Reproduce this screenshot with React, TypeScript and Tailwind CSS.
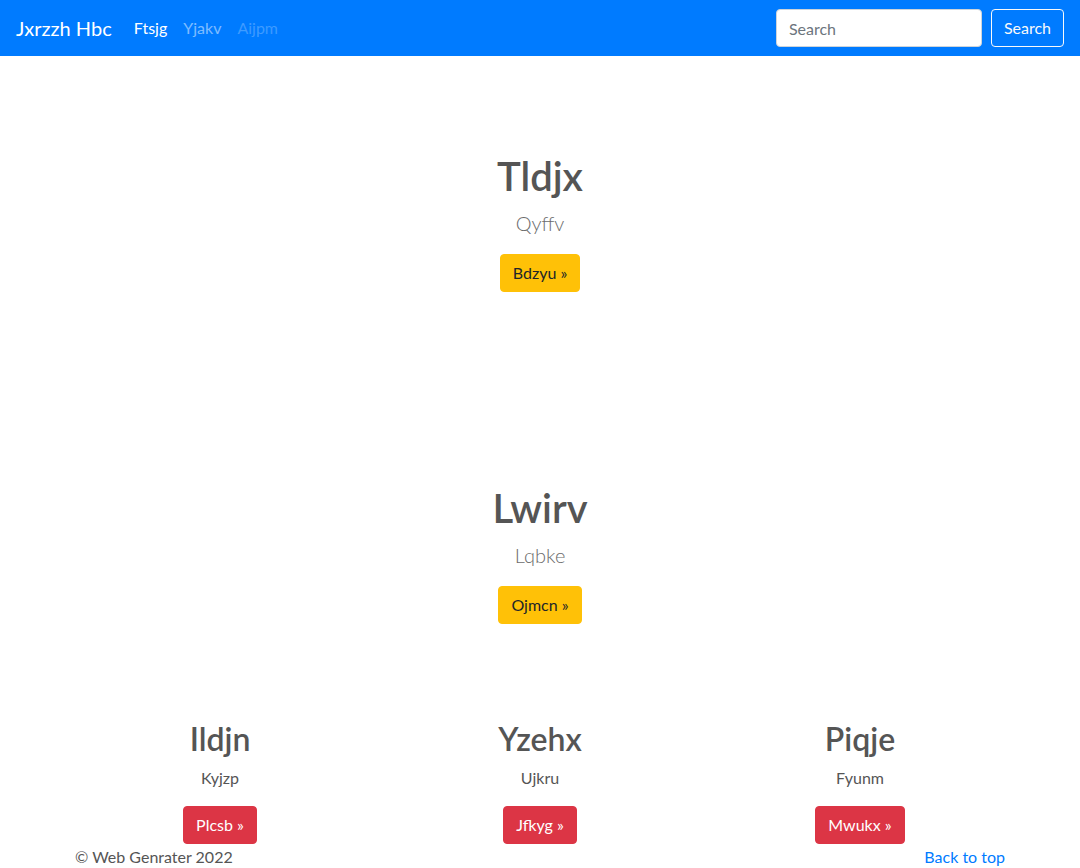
import React from 'react'

const font = "font-['Segoe_UI',Lato,'Liberation_Sans',sans-serif]"

const heroes = [
   { title: 'Tldjx', lead: 'Qyffv', btn: 'Bdzyu' },
   { title: 'Lwirv', lead: 'Lqbke', btn: 'Ojmcn' },
]

const cols = [
   { title: 'Ildjn', text: 'Kyjzp', btn: 'Plcsb' },
   { title: 'Yzehx', text: 'Ujkru', btn: 'Jfkyg' },
   { title: 'Piqje', text: 'Fyunm', btn: 'Mwukx' },
]

const App = () => {
   return (
      <div className={`${font} min-h-screen bg-white text-[#212529] text-base leading-normal`}>
         {/* navbar */}
         <nav className="flex items-center justify-between h-14 px-4 bg-[#007bff]">
            <div className="flex items-center">
               <a href="#" className="text-xl leading-normal text-white py-[5px] mr-[14px]">Jxrzzh Hbc</a>
               <a href="#" className="px-2 py-2 text-white">Ftsjg</a>
               <a href="#" className="px-2 py-2 text-white/50">Yjakv</a>
               <span className="px-2 py-2 text-white/25">Aijpm</span>
            </div>
            <form className="flex items-center" onSubmit={e => e.preventDefault()}>
               <input
                  type="text"
                  placeholder="Search"
                  className="w-[206px] h-[38px] px-3 rounded bg-white border border-[#ced4da] text-[#495057] placeholder:text-[#6c757d] outline-none mr-[9px]"
               />
               <button className="h-[38px] px-3 rounded border border-[#f8f9fa] text-[#f8f9fa]">Search</button>
            </form>
         </nav>

         {/* heroes */}
         {heroes.map((h, i) => (
            <section key={i} className="py-24 text-center">
               <h1 className="text-[40px] leading-[1.2] font-semibold text-[#555] mb-2">{h.title}</h1>
               <p className="text-xl leading-normal font-light text-[#6c6c6c] mb-4">{h.lead}</p>
               <a href="#" className="inline-block h-[38px] leading-[36px] px-3 rounded bg-[#ffc107] border border-[#ffc107] text-[#212529]">
                  {h.btn} &raquo;
               </a>
            </section>
         ))}

         {/* columns */}
         <div className="w-[960px] mx-auto grid grid-cols-3 text-center">
            {cols.map((c, i) => (
               <div key={i} className="px-[15px]">
                  <h2 className="text-[32px] leading-[1.2] font-semibold text-[#555] mb-2">{c.title}</h2>
                  <p className="text-[#555] mb-4">{c.text}</p>
                  <a href="#" className="inline-block h-[38px] leading-[36px] px-3 rounded bg-[#dc3545] border border-[#dc3545] text-white">
                     {c.btn} &raquo;
                  </a>
               </div>
            ))}
         </div>

         {/* footer */}
         <footer className="w-[960px] mx-auto px-[15px] pt-px flex justify-between text-[#555]">
            <p>&copy; Web Genrater 2022</p>
            <a href="#" className="text-[#007bff]">Back to top</a>
         </footer>
      </div>
   )
}

export default App
